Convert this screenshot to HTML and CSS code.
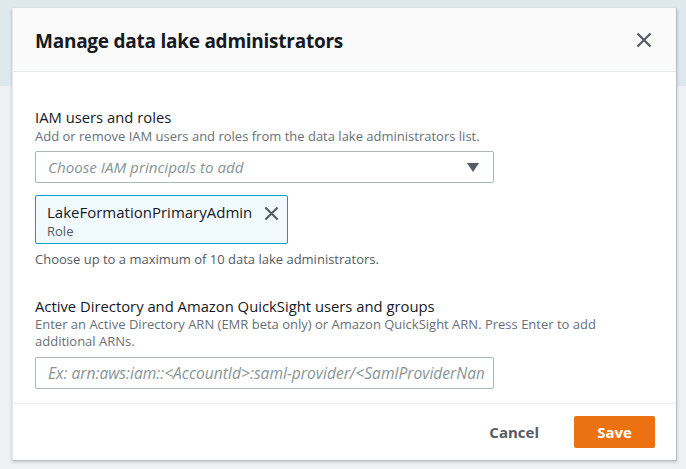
FILE: index.html
```html
<!DOCTYPE html>
<html lang="en">
<head>
<meta charset="utf-8">
<title>Manage data lake administrators</title>
<link rel="stylesheet" href="styles.css">
</head>
<body>
<div class="page">
  <div class="modal">
    <header class="modal-header">
      <h2 class="modal-title">Manage data lake administrators</h2>
      <button class="close-btn" aria-label="Close">
        <svg width="16" height="16" viewBox="0 0 16 16"><path d="M1.5 1.5 L14.5 14.5 M14.5 1.5 L1.5 14.5" stroke="#545b64" stroke-width="2.2" fill="none"/></svg>
      </button>
    </header>
    <div class="modal-body">
      <div class="field">
        <div class="label">IAM users and roles</div>
        <div class="desc">Add or remove IAM users and roles from the data lake administrators list.</div>
        <div class="select">
          <span class="placeholder">Choose IAM principals to add</span>
          <svg class="caret" width="12" height="9" viewBox="0 0 12 9"><path d="M0 0 H12 L6 9 Z" fill="#545b64"/></svg>
        </div>
        <div class="token">
          <div class="token-text">
            <div class="token-name">LakeFormationPrimaryAdmin</div>
            <div class="token-sub">Role</div>
          </div>
          <svg class="token-x" width="15" height="15" viewBox="0 0 16 16"><path d="M1.5 1.5 L14.5 14.5 M14.5 1.5 L1.5 14.5" stroke="#545b64" stroke-width="2.2" fill="none"/></svg>
        </div>
        <div class="hint">Choose up to a maximum of 10 data lake administrators.</div>
      </div>
      <div class="field field-second">
        <div class="label">Active Directory and Amazon QuickSight users and groups</div>
        <div class="desc desc-wrap">Enter an Active Directory ARN (EMR beta only) or Amazon QuickSight ARN. Press Enter to add additional ARNs.</div>
        <div class="input">
          <span class="placeholder placeholder-arn">Ex: arn:aws:iam::&lt;AccountId&gt;:saml-provider/&lt;SamlProviderName&gt;</span>
        </div>
      </div>
    </div>
    <footer class="modal-footer">
      <button class="btn-link">Cancel</button>
      <button class="btn-primary">Save</button>
    </footer>
  </div>
</div>
</body>
</html>
```
FILE: styles.css
```css
html, body {
  margin: 0;
  padding: 0;
}
body {
  width: 686px;
  height: 469px;
  overflow: hidden;
  background: linear-gradient(to bottom, #dfe8ec 0, #dfe8ec 86px, #eef0f1 86px, #eef0f1 100%);
  font-family: "Open Sans", "Noto Sans", sans-serif;
  color: #16191f;
}
.page {
  padding: 8px 9px 8px 12px;
  box-sizing: border-box;
  height: 469px;
}
.modal {
  width: 665px;
  height: 453px;
  background: #fff;
  box-sizing: border-box;
  border-right: 1px solid #b8bdbf;
  border-bottom: 1px solid #b8bdbf;
  border-left: 1px solid #e4e7e8;
  box-shadow: 0 1px 3px rgba(0,28,36,0.2);
  display: flex;
  flex-direction: column;
}
.modal-header {
  height: 64px;
  box-sizing: border-box;
  background: #fafafa;
  border-bottom: 1px solid #eaeded;
  display: flex;
  align-items: center;
  justify-content: space-between;
  padding: 0 24px 0 22px;
}
.modal-title {
  margin: 0;
  font-size: 19px;
  font-weight: 700;
  letter-spacing: -0.25px;
  color: #16191f;
  line-height: 24px;
  padding-top: 2px;
}
.close-btn {
  border: 0;
  background: none;
  padding: 0;
  display: flex;
  margin-top: 1px;
}
.modal-body {
  flex: 1;
  padding: 35px 22px 0 22px;
  border-bottom: 1px solid #eaeded;
}
.label {
  font-size: 14.8px;
  line-height: 20px;
  color: #16191f;
}
.desc {
  font-size: 13px;
  line-height: 19px;
  color: #687078;
}
.desc-wrap {
  line-height: 17px;
  width: 575px;
}
.select, .input {
  margin-top: 5px;
  width: 459px;
  height: 32px;
  box-sizing: border-box;
  border: 1px solid #aab7b8;
  border-radius: 2px;
  display: flex;
  align-items: center;
  justify-content: space-between;
  padding: 0 14px 0 12px;
  overflow: hidden;
  white-space: nowrap;
}
.input {
  margin-top: 7px;
  padding-right: 0;
  justify-content: flex-start;
}
.placeholder {
  font-style: italic;
  font-size: 15.2px;
  color: #879596;
}
.placeholder-arn {
  font-size: 15.6px;
  display: block;
  width: 436px;
  overflow: hidden;
  white-space: nowrap;
}
.caret {
  flex: none;
}
.token {
  margin-top: 12px;
  width: 253px;
  height: 49px;
  box-sizing: border-box;
  border: 1px solid #00a1c9;
  border-radius: 2px;
  background: #f1faff;
  display: flex;
  justify-content: space-between;
  align-items: flex-start;
  padding: 6px 8px 0 11px;
}
.token-name {
  font-size: 15px;
  line-height: 21px;
  color: #16191f;
}
.token-sub {
  font-size: 13px;
  line-height: 17px;
  color: #545b64;
}
.token-x {
  margin-top: 4px;
}
.hint {
  margin-top: 6px;
  font-size: 13px;
  line-height: 18px;
  color: #545b64;
}
.field-second {
  margin-top: 28px;
}
.modal-footer {
  height: 56px;
  display: flex;
  align-items: center;
  justify-content: flex-end;
  padding: 0 21px 0 0;
  gap: 35px;
}
.btn-link {
  border: 0;
  background: none;
  font-family: inherit;
  font-weight: 700;
  font-size: 15px;
  color: #545b64;
  padding: 0;
}
.btn-primary {
  border: 0;
  background: #ec7211;
  color: #fff;
  font-family: inherit;
  font-weight: 700;
  font-size: 15px;
  width: 81px;
  height: 32px;
  border-radius: 2px;
}
```
